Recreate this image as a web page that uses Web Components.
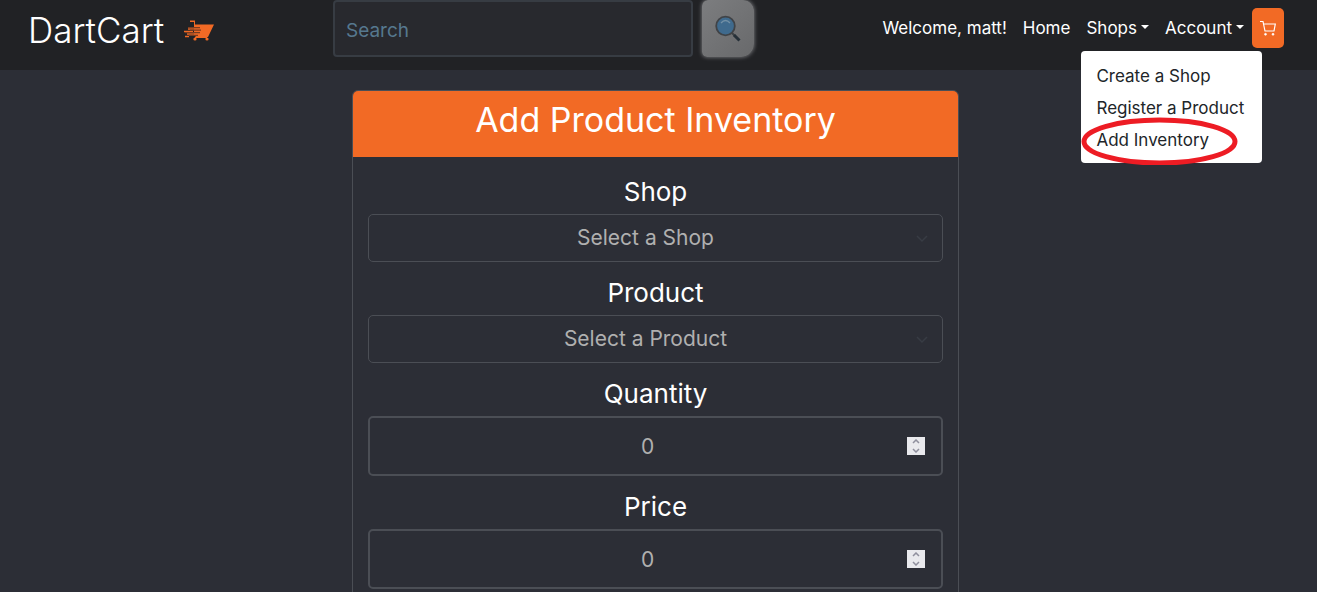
<!DOCTYPE html>
<html lang="en">
<head>
<meta charset="utf-8">
<meta name="viewport" content="width=device-width, initial-scale=1">
<title>DartCart - Add Product Inventory</title>
<style>
html { scrollbar-width: none; background: #2c2e36; }
body { margin: 0; min-height: 100vh; font-family: Inter, "Open Sans", sans-serif; font-size: 17px; line-height: 24px; color: #fff; }
</style>
</head>
<body>
<dart-app></dart-app>
<script>
const define = (name, html, setup) => customElements.define(name, class extends HTMLElement {
  connectedCallback() {
    if (this.shadowRoot) return;
    this.attachShadow({ mode: "open" }).innerHTML = "<style>*{box-sizing:border-box}</style>" + (typeof html === "function" ? html(this) : html);
    if (setup) setup(this);
  }
});

define("dart-brand", `
<style>
:host { display: block; }
a { display: inline-flex; align-items: center; gap: 20px; height: 60px; color: #fff; text-decoration: none; font-size: 35px; font-weight: 300; line-height: 40px; }
svg { display: block; }
</style>
<a href="#"><span>DartCart</span>
<svg width="31" height="22" viewBox="0 0 31 22" aria-hidden="true">
  <path d="M6 1.500h5v4h19l-6 12.500H12l-2-2V3H6z" fill="#f26a25"/>
  <path d="M11 18.500h12" stroke="#f26a25" stroke-width="1"/>
  <circle cx="11" cy="20" r="1.600" fill="#f26a25"/><circle cx="23" cy="20" r="1.600" fill="#f26a25"/>
  <path d="M4 10h11M0 12.500h9M3 15h8M1 17.500h4" stroke="#f26a25" stroke-width="1.300"/>
  <path d="M4 8.700h12M6 11.200h11M1 13.700h15M5 16.300h9" stroke="#7a3d20" stroke-width="1.200"/>
</svg></a>`);

define("search-bar", `
<style>
:host { display: block; }
form { display: flex; gap: 9px; margin: 0; }
input { flex: 1; min-width: 0; height: 57px; padding: 3px 11px 0; border: 2px solid #373c43; border-radius: 4px; background: #28292e; color: #fff; font: inherit; font-size: 19px; outline: 0; }
input::placeholder { color: #56788f; opacity: 1; }
button { width: 52px; height: 57px; padding: 0; border: 0; border-radius: 6px 11px 13px 5px; background: linear-gradient(135deg, #7c7d7f, #68696b); box-shadow: 0 0 4px #85868a; display: grid; place-items: center; }
svg { display: block; }
</style>
<form onsubmit="return false">
<input type="search" placeholder="Search" aria-label="Search">
<button type="submit" aria-label="Search">
<svg width="28" height="28" viewBox="0 0 28 28" aria-hidden="true">
  <path d="M17 17l4 4" stroke="#3d4044" stroke-width="2"/>
  <path d="M20 20l5.500 5.500" stroke="#263038" stroke-width="3"/>
  <circle cx="11.500" cy="11" r="9.300" fill="#3f6a8d" stroke="#404347" stroke-width="1.800"/>
  <path d="M7 8q4.500-5 9 0" fill="none" stroke="#7290a6" stroke-width="1.300"/>
</svg></button>
</form>`);

define("nav-menu", el => `
<style>
:host { display: block; position: relative; }
button { display: flex; align-items: center; gap: 4px; height: 40px; padding: 0 8px; border: 0; background: none; color: inherit; font: inherit; white-space: nowrap; }
button::after { content: ""; border: 4px solid transparent; border-top-color: currentColor; border-bottom: 0; margin-bottom: 2px; }
.menu { position: absolute; z-index: 2; top: 43px; left: 3px; width: 181px; padding: 8px 0; border-radius: 4px; background: #fff; color: #212529; }
</style>
<button type="button" aria-haspopup="true" aria-expanded="${el.hasAttribute("open")}">${el.getAttribute("label")}</button>
${el.hasAttribute("open") ? '<div class="menu"><slot></slot></div>' : ""}`);

define("menu-item", el => `
<style>
:host { display: block; position: relative; }
a { display: block; padding: 5px 0 3px 15px; color: inherit; text-decoration: none; white-space: nowrap; }
svg { position: absolute; left: 0; top: -10px; pointer-events: none; }
</style>
<a href="#"><slot></slot></a>
${el.hasAttribute("marked") ? '<svg width="158" height="52" viewBox="0 0 158 52" aria-hidden="true"><ellipse cx="78.500" cy="28.500" rx="75.500" ry="21.500" fill="none" stroke="#ed1c24" stroke-width="5"/></svg>' : ""}`);

define("site-nav", `
<style>
:host { display: block; }
nav { display: flex; justify-content: flex-end; align-items: center; padding-top: 8px; white-space: nowrap; }
a, span { padding: 0 8px; color: inherit; text-decoration: none; }
.cart { display: grid; place-items: center; width: 32px; height: 40px; padding: 0; border: 0; border-radius: 5px; background: #f26a25; }
</style>
<nav>
<span>Welcome, matt!</span><a href="#">Home</a>
<nav-menu label="Shops" open>
  <menu-item>Create a Shop</menu-item><menu-item>Register a Product</menu-item><menu-item marked>Add Inventory</menu-item>
</nav-menu>
<nav-menu label="Account"></nav-menu>
<button class="cart" type="button" aria-label="Cart"><svg width="16" height="16" viewBox="0 0 16 16" fill="none" stroke="#fff" stroke-width="1.200" aria-hidden="true"><path d="M0 1.500h3l2 9.500h9L15.300 4H4"/><circle cx="5.500" cy="14.300" r="1" fill="#fff" stroke-width=".6"/><circle cx="13" cy="14.300" r="1" fill="#fff" stroke-width=".6"/></svg></button>
</nav>`);

define("site-header", `
<style>
:host { display: grid; grid-template-columns: 305px minmax(0, 421px) minmax(0, 1fr); align-items: start; height: 70px; padding: 0 33px 0 28px; background: #212225; }
</style>
<dart-brand></dart-brand><search-bar></search-bar><site-nav></site-nav>`);

define("select-field", el => `
<style>
:host { display: grid; gap: 8px; }
label { text-align: center; font-size: 26px; line-height: 29px; }
select { appearance: none; width: 100%; height: 48px; padding: 0 35px 0 15px; border: 1px solid #4b4e55; border-radius: 5px; color: #b0b0b0; font: inherit; font-size: 21px; text-align: center; text-align-last: center;
  background: url("data:image/svg+xml,%3Csvg xmlns='http://www.w3.org/2000/svg' viewBox='0 0 16 16'%3E%3Cpath fill='none' stroke='%23383c44' stroke-width='1.500' d='M3 6l5 5 5-5'/%3E%3C/svg%3E") right 12px center / 16px 16px no-repeat; }
</style>
<label for="f">${el.getAttribute("label")}</label>
<select id="f"><option>${el.getAttribute("prompt")}</option></select>`);

define("number-field", el => `
<style>
:host { display: grid; gap: 8px; }
label { text-align: center; font-size: 26px; line-height: 29px; }
.box { display: flex; align-items: center; height: 60px; padding: 0 16px 0 18px; border: 2px solid #4b4e55; border-radius: 5px; }
input { appearance: textfield; flex: 1; min-width: 0; height: 48px; padding: 0; border: 0; outline: 0; background: none; color: #b0b0b0; font: inherit; font-size: 21px; text-align: center; }
input::-webkit-inner-spin-button { appearance: none; display: none; }
.step { display: grid; width: 18px; height: 18px; background: #e9e9ed; }
button { display: grid; place-items: center; width: 18px; height: 9px; padding: 0; border: 0; background: none; }
svg { display: block; }
</style>
<label for="f">${el.getAttribute("label")}</label>
<div class="box"><input id="f" type="number" value="0" min="0">
<div class="step">
<button type="button" aria-label="Increase"><svg width="8" height="5" viewBox="0 0 8 5"><path d="M1 4l3-3 3 3" fill="none" stroke="#8f8f9d" stroke-width="1.500"/></svg></button>
<button type="button" aria-label="Decrease"><svg width="8" height="5" viewBox="0 0 8 5"><path d="M1 1l3 3 3-3" fill="none" stroke="#8f8f9d" stroke-width="1.500"/></svg></button>
</div></div>`, el => {
  const input = el.shadowRoot.querySelector("input");
  const [up, down] = el.shadowRoot.querySelectorAll("button");
  up.onclick = () => input.stepUp();
  down.onclick = () => input.stepDown();
});

define("form-card", `
<style>
:host { display: block; border: 1px solid #4b4e55; border-radius: 6px; overflow: hidden; }
h1 { margin: 0; padding: 9px 16px 17px; background: #f26a25; text-align: center; font-size: 34px; font-weight: 400; line-height: 40px; }
.body { display: grid; gap: 16px; padding: 20px 15px; }
</style>
<h1><slot name="title"></slot></h1>
<div class="body"><slot></slot></div>`);

define("dart-app", `
<style>
:host { display: block; }
main { padding: 20px 6px 0 0; }
form-card { width: 607px; max-width: 100%; margin: 0 auto; }
</style>
<site-header></site-header>
<main><form-card>
<span slot="title">Add Product Inventory</span>
<select-field label="Shop" prompt="Select a Shop"></select-field>
<select-field label="Product" prompt="Select a Product"></select-field>
<number-field label="Quantity"></number-field>
<number-field label="Price"></number-field>
</form-card></main>`);
</script>
</body>
</html>
